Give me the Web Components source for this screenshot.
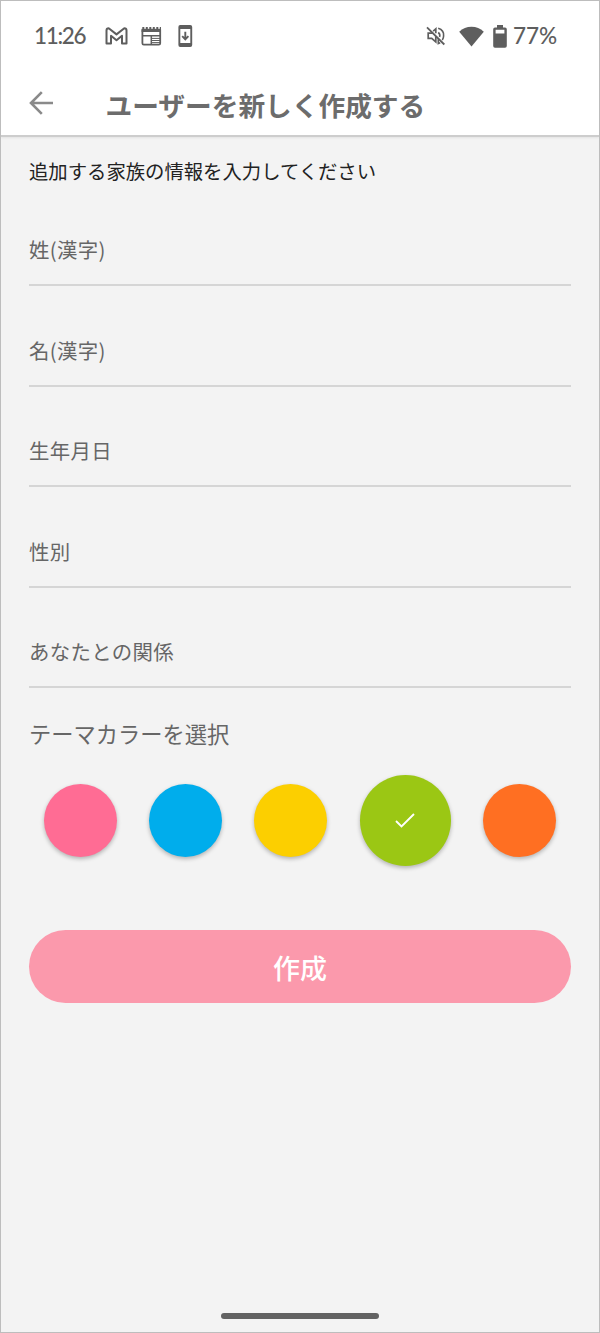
<!DOCTYPE html>
<html lang="ja">
<head>
<meta charset="utf-8">
<title>ユーザーを新しく作成する</title>
<style>
body{margin:0;background:#f3f3f3;font-family:"Noto Sans CJK JP",sans-serif}
</style>
</head>
<body>
<user-create-page></user-create-page>
<script>
const define = (name, html, setup) => customElements.define(name, class extends HTMLElement {
  constructor() {
    super();
    const t = document.createElement('template');
    t.innerHTML = html;
    this.attachShadow({mode: 'open'}).append(t.content.cloneNode(true));
    if (setup) setup(this);
  }
});

define('status-bar', `
<style>
:host{display:flex;align-items:center;height:70px;box-sizing:border-box;padding:0 41px 0 33px;justify-content:space-between;color:#5e5e5e;font:500 22.5px/70px Lato,sans-serif}
.g{display:flex;align-items:center;height:70px}
svg{display:block;flex:none}
.time{width:51px;letter-spacing:-1.3px;white-space:nowrap}
.pct{width:45px;white-space:nowrap;margin-left:6px}
</style>
<div class="g">
  <span class="time">11:26</span>
  <svg style="margin-left:20px" width="23" height="18" viewBox="0 0 23 18" fill="none" stroke="currentColor" stroke-width="2" stroke-linejoin="round"><path d="M1.5 3.5Q1.5 1.2 3.7 1.2L11.5 7.4L19.3 1.2Q21.5 1.2 21.5 3.5V16.4H17V8.8L11.5 13.2L6 8.8V16.4H1.5Z"/></svg>
  <svg style="margin-left:13px" width="21" height="19" viewBox="0 0 21 19" fill="none" stroke="currentColor"><path stroke-width="1.8" d="M1.4 2.5V16.2Q1.4 17.6 2.8 17.6H17.8Q19.2 17.6 19.2 16.2V2.5"/><path stroke-width="3.2" d="M.6 3.4H20"/><path stroke-width="2" stroke-dasharray="2 1.5" d="M1.3 1.1H20"/><path stroke-width="1.5" d="M1 8.8H19.5M10.3 8.8V17.5"/><path stroke-width="1" d="M11 11.4H19M11 13.5H19M11 15.6H19"/></svg>
  <svg style="margin-left:15.5px" width="15" height="22" viewBox="0 0 15 22"><path fill="currentColor" fill-rule="evenodd" d="M2.2 0H12.2Q14.2 0 14.2 2V20Q14.2 22 12.2 22H2.2Q.4 22 .4 20V2Q.4 0 2.2 0ZM2.3 4V18H12.3V4Z"/><path d="M7.3 6.8V14M4.2 11.2L7.3 14.4L10.4 11.2" fill="none" stroke="currentColor" stroke-width="1.9"/></svg>
</div>
<div class="g">
  <svg width="20" height="20" viewBox="0 0 20 20" fill="none" stroke="currentColor"><path stroke-width="1.8" d="M1 1.3L18.3 18.5"/><path stroke-width="1.7" d="M6.5 7.2H2.2V12.3H5.7L9.8 15.8V10.5M7.2 5.1L9.8 2.9V7.3"/><path stroke-width="1.6" d="M12.2 6.5Q14.5 8 13.6 11M12.2 2.2Q18.3 4.2 17.6 10Q17.5 12.2 16.3 14M12.3 13.3V17.6L14.2 16.8"/></svg>
  <svg style="margin-left:13px" width="25" height="21" viewBox="0 0 25 21"><path fill="currentColor" d="M.2 5.8Q5.4 .7 12.5 .7T24.8 5.8L12.5 20.6Z"/></svg>
  <svg style="margin-left:9px" width="14" height="23" viewBox="0 0 14 23"><path fill="currentColor" fill-rule="evenodd" d="M4 0H10V2.5H12Q13.8 2.5 13.8 4.3V21Q13.8 22.8 12 22.8H2Q.2 22.8 .2 21V4.3Q.2 2.5 2 2.5H4ZM2.6 4.8V8.5H11.4V4.8Z"/></svg>
  <span class="pct">77%</span>
</div>`);

define('app-bar', `
<style>
:host{display:flex;align-items:center;height:64px;box-sizing:border-box;padding-left:28px;color:#6c6c6c}
svg{display:block;color:#8a8a8a}
h1{margin:4px 0 0 52.5px;font-weight:700;font-size:26.7px;line-height:40px;white-space:nowrap}
</style>
<svg width="24" height="24" viewBox="0 0 24 24" fill="none" stroke="currentColor" stroke-width="2.6"><path d="M24 12H3M12.8 1.2L2 12L12.8 22.8"/></svg>
<h1><slot></slot></h1>`);

define('form-field', `
<style>
:host{display:flex;flex-direction:column;justify-content:flex-end;height:100.65px;box-sizing:border-box;border-bottom:2px solid #d5d5d5;color:#666;font-size:20.4px;letter-spacing:.35px;line-height:30px;padding-bottom:20px}
</style>
<span><slot></slot></span>`);

define('color-swatch', `
<style>
:host{display:grid;place-items:center;width:73px;height:73px;border-radius:50%;background:var(--swatch);box-shadow:0 2px 4px #0004;flex:none}
:host([selected]){width:91px;height:91px}
svg{display:none}
:host([selected]) svg{display:block;margin:2px 1px 0 0}
</style>
<svg width="20" height="16" viewBox="0 0 20 16" fill="none" stroke="#fff" stroke-width="1.9"><path d="M1 8L6.5 13.5L19 1"/></svg>`, el => {
  el.style.setProperty('--swatch', el.getAttribute('color'));
});

define('submit-button', `
<style>
:host{display:block}
button{display:block;width:100%;height:73px;border:0;border-radius:37px;background:#fb99ac;color:#fff;font-family:inherit;font-weight:500;font-size:27px;line-height:40px;padding:3px 0 0}
</style>
<button type="button"><slot></slot></button>`);

define('user-create-page', `
<style>
:host{display:flex;flex-direction:column;width:600px;height:1333px;box-sizing:border-box;border:1px solid #bdbdbd;background:#f3f3f3;overflow:hidden}
header{background:#fff;border-bottom:2px solid #cdcdcd;box-shadow:0 1px 2px #0001}
main{padding:0 28px;flex:1}
.intro{margin:19px 0 0;height:30px;font-size:19.35px;line-height:30px;color:#222;white-space:nowrap}
.fields{margin-top:-.75px}
h2{margin:27.75px 0 0;font-weight:400;font-size:22.25px;line-height:34px;color:#666}
.colors{display:flex;align-items:center;justify-content:space-between;height:91px;margin:24.5px 15px 0 14.5px}
submit-button{margin-top:64px}
footer{display:flex;justify-content:center;height:19px}
footer i{width:158px;height:6px;border-radius:3px;background:#626262}
</style>
<header><status-bar></status-bar><app-bar>ユーザーを新しく作成する</app-bar></header>
<main>
  <p class="intro">追加する家族の情報を入力してください</p>
  <div class="fields">
    <form-field>姓(漢字)</form-field>
    <form-field>名(漢字)</form-field>
    <form-field>生年月日</form-field>
    <form-field>性別</form-field>
    <form-field>あなたとの関係</form-field>
  </div>
  <h2>テーマカラーを選択</h2>
  <div class="colors">
    <color-swatch color="#ff6c94"></color-swatch>
    <color-swatch color="#00adec"></color-swatch>
    <color-swatch color="#fccf00"></color-swatch>
    <color-swatch color="#9bc714" selected></color-swatch>
    <color-swatch color="#ff6f22"></color-swatch>
  </div>
  <submit-button>作成</submit-button>
</main>
<footer><i></i></footer>`);
</script>
</body>
</html>
